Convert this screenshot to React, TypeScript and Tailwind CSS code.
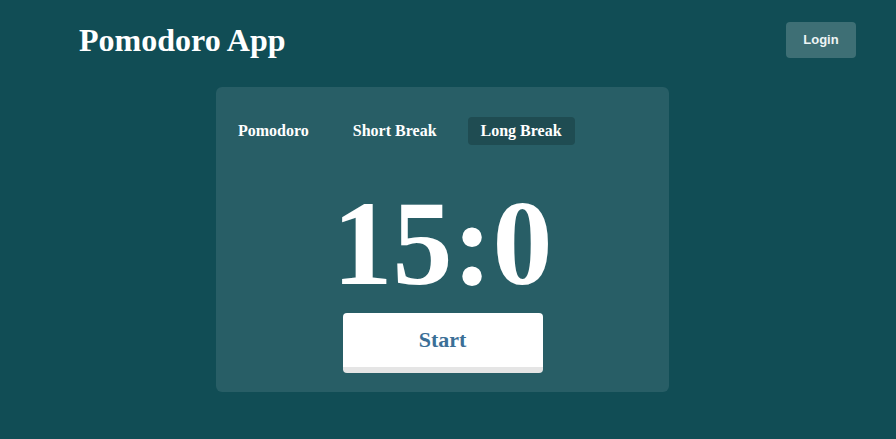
import React, { useState } from 'react';

const modes = [
  { key: 'pomodoro', label: 'Pomodoro', minutes: 25 },
  { key: 'short', label: 'Short Break', minutes: 5 },
  { key: 'long', label: 'Long Break', minutes: 15 },
];

const App: React.FC = () => {
  const [mode, setMode] = useState('long');
  const current = modes.find((m) => m.key === mode) ?? modes[2];

  return (
    <div className="min-h-[439px] bg-[#114d55] font-['Liberation_Serif',serif] text-white">
      {/* Header */}
      <header className="flex items-center justify-between pl-[79px] pr-[40px] pt-[22px]">
        <h1 className="text-[32px] font-bold leading-[36px]">Pomodoro App</h1>
        <button className="h-[36px] w-[70px] rounded-[4px] bg-[#3e6f75] font-['Liberation_Sans',sans-serif] text-[13px] font-bold text-[#eef4f4]">
          Login
        </button>
      </header>

      {/* Timer card */}
      <main className="ml-[216px] mt-[29px] flex w-[453px] flex-col rounded-[6px] bg-[#285e66] pb-[19px] pl-[9px] pt-[30px]">
        <div className="flex gap-[18px]">
          {modes.map((m) => (
            <button
              key={m.key}
              onClick={() => setMode(m.key)}
              className={`h-[28px] rounded-[4px] px-[13px] text-[16px] font-bold ${mode === m.key ? 'bg-[#1f4c52]' : ''}`}
            >
              {m.label}
            </button>
          ))}
        </div>
        <div className="-ml-[9px] mt-[39px] flex flex-col items-center">
          <div className="text-[120px] font-bold leading-none">{current.minutes}:0</div>
          <button className="mt-[9px] h-[60px] w-[200px] rounded-[4px] border-b-[6px] border-[#e5e5e5] pb-[2px] bg-white text-[22px] font-bold text-[#3b6f97]">
            Start
          </button>
        </div>
      </main>
    </div>
  );
};

export default App;
